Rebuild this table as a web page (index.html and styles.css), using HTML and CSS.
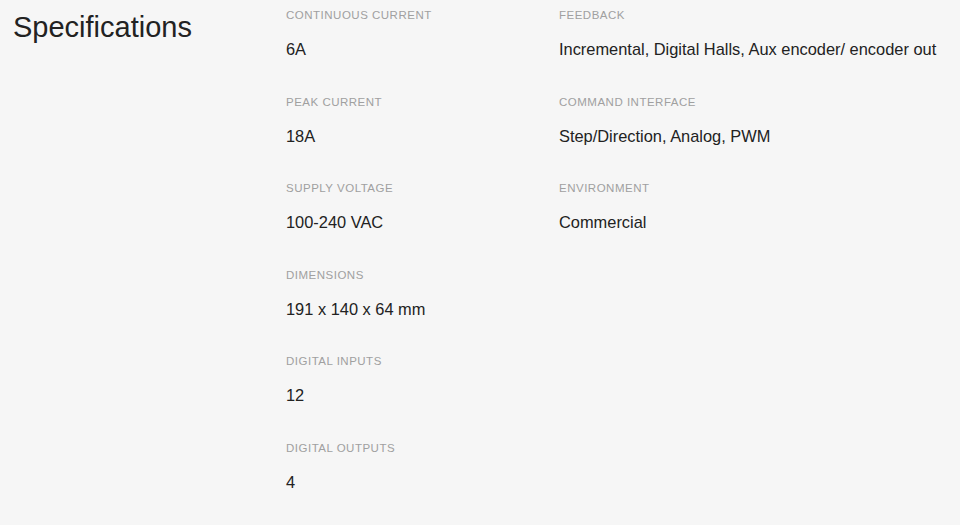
FILE: index.html
```html
<!DOCTYPE html>
<html>
<head>
<meta charset="utf-8">
<link rel="stylesheet" href="styles.css">
</head>
<body>
<section class="specs">
  <h2 class="title">Specifications</h2>
  <div class="col">
    <div class="item"><div class="label">Continuous Current</div><div class="value">6A</div></div>
    <div class="item"><div class="label">Peak Current</div><div class="value">18A</div></div>
    <div class="item"><div class="label">Supply Voltage</div><div class="value">100-240 VAC</div></div>
    <div class="item"><div class="label">Dimensions</div><div class="value">191 x 140 x 64 mm</div></div>
    <div class="item"><div class="label">Digital Inputs</div><div class="value">12</div></div>
    <div class="item"><div class="label">Digital Outputs</div><div class="value">4</div></div>
  </div>
  <div class="col">
    <div class="item"><div class="label">Feedback</div><div class="value">Incremental, Digital Halls, Aux encoder/ encoder out</div></div>
    <div class="item"><div class="label">Command Interface</div><div class="value">Step/Direction, Analog, PWM</div></div>
    <div class="item"><div class="label">Environment</div><div class="value">Commercial</div></div>
  </div>
</section>
</body>
</html>
```

FILE: styles.css
```css
html, body {
  margin: 0;
  padding: 0;
  background: #f6f6f6;
  font-family: "Liberation Sans", Arial, sans-serif;
  color: #222;
}
.specs {
  display: grid;
  grid-template-columns: 273px 273px 1fr;
  padding: 8px 0 0 13px;
}
.title {
  margin: 0;
  font-size: 29px;
  font-weight: 400;
  line-height: 36px;
  color: #222;
  margin-top: 1px;
}
.col {
  display: flex;
  flex-direction: column;
}
.item {
  height: 86.6px;
}
.label {
  font-size: 11.5px;
  letter-spacing: 0.5px;
  text-transform: uppercase;
  color: #a0a0a0;
  line-height: 14px;
}
.value {
  margin-top: 17px;
  font-size: 16.4px;
  line-height: 20px;
  color: #222;
  white-space: nowrap;
}
```
